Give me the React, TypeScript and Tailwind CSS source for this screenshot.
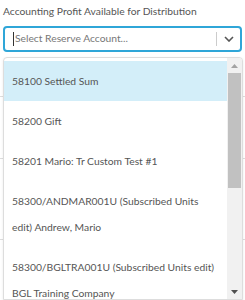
import React from 'react';

const options = [
  '58100 Settled Sum',
  '58200 Gift',
  '58201 Mario: Tr Custom Test #1',
  '58300/ANDMAR001U (Subscribed Units edit) Andrew, Mario',
  '58300/BGLTRA001U (Subscribed Units edit) BGL Training Company',
];

export default function App() {
  return (
    <div
      className="relative w-[245px] h-[300px] overflow-hidden bg-white text-[#555]"
      style={{ fontFamily: 'Lato, "Liberation Sans", sans-serif' }}
    >
      <div className="px-[3px] pt-[3px]">
        <div className="text-[10.3px] leading-[16px] text-[#555]">Accounting Profit Available for Distribution</div>
        <div className="mt-[7px] flex h-[26px] items-center rounded-[4px] border-2 border-[#2fa6d8] bg-white">
          <div className="flex flex-1 items-center pl-[8px] text-[10.3px] text-[#777]">
            <span className="mr-[1px] h-[14px] w-px bg-[#333]" />
            Select Reserve Account...
          </div>
          <span className="h-[14px] w-px bg-[#ccc]" />
          <div className="flex w-[23px] items-center justify-center">
            <svg width="10" height="6" viewBox="0 0 10 6" fill="none">
              <path d="M1 1l4 4 4-4" stroke="#555" strokeWidth="1.6" />
            </svg>
          </div>
        </div>
      </div>

      {/* form rows behind the menu */}
      <div className="mt-[44px] h-px bg-[#ddd]" />
      <div className="mt-[61px] h-px bg-[#ddd]" />
      <div className="mt-[80px] h-px bg-[#ddd]" />

      <div className="absolute left-[3px] top-[57px] flex h-[243px] w-[240px] overflow-hidden rounded-t-[4px] border border-[#ddd] bg-white shadow-[0_1px_3px_rgba(0,0,0,0.08)]">
        <div className="flex-1 pt-[3px]">
          {options.map((o, i) => (
            <div
              key={o}
              className={`pl-[8px] pr-[12px] py-[7px] text-[10.3px] leading-[26px] text-[#555] ${i === 0 ? 'bg-[#d3eef9]' : ''}`}
            >
              {o}
            </div>
          ))}
        </div>
        <div className="flex w-[15px] flex-col items-center bg-[#f1f1f1]">
          <div className="flex h-[15px] w-full items-center justify-center">
            <svg width="7" height="4" viewBox="0 0 7 4">
              <path d="M0 4L3.5 0L7 4z" fill="#a3a3a3" />
            </svg>
          </div>
          <div className="h-[115px] w-[13px] bg-[#c1c1c1]" />
          <div className="flex-1" />
          <div className="flex h-[15px] w-full items-center justify-center">
            <svg width="7" height="4" viewBox="0 0 7 4">
              <path d="M0 0L3.5 4L7 0z" fill="#505050" />
            </svg>
          </div>
        </div>
      </div>
    </div>
  );
}
